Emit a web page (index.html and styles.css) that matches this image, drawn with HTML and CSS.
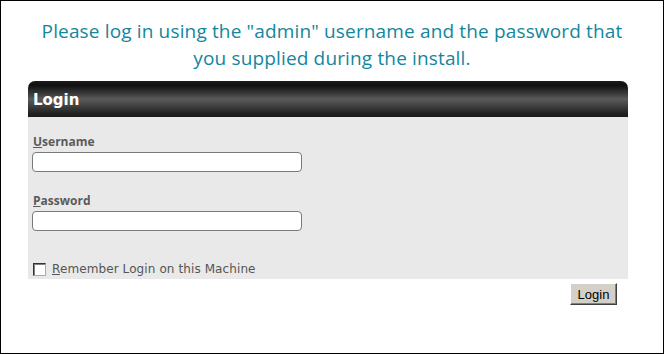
FILE: index.html
```html
<!DOCTYPE html>
<html>
<head>
<meta charset="utf-8">
<link rel="stylesheet" href="styles.css">
</head>
<body>
<div class="frame">
  <h1 class="intro">Please log in using the "admin" username and the password that you supplied during the install.</h1>
  <div class="panel">
    <div class="panel-head">Login</div>
    <div class="panel-body">
      <label class="field-label" for="user"><u>U</u>sername</label>
      <input class="text-input" id="user" type="text">
      <label class="field-label pw" for="pass"><u>P</u>assword</label>
      <input class="text-input" id="pass" type="password">
      <label class="remember"><span class="check"></span><span><u>R</u>emember Login on this Machine</span></label>
    </div>
    <div class="actions"><button class="btn" type="button">Login</button></div>
  </div>
</div>
</body>
</html>
```
FILE: styles.css
```css
html, body { margin: 0; padding: 0; background: #fff; }
.frame {
  width: 664px; height: 354px; box-sizing: border-box;
  border: 1px solid #000;
  font-family: "Open Sans", "DejaVu Sans", sans-serif;
}
.intro {
  margin: 17px 0 0 0;
  padding: 0 30px;
  text-align: center;
  font-weight: normal;
  font-size: 19px;
  line-height: 27px;
  letter-spacing: 0.15px;
  color: #13869d;
}
.panel { margin: 9px 0 0 27px; width: 600px; }
.panel-head {
  height: 36px; box-sizing: border-box;
  border-radius: 7px 7px 0 0;
  background: linear-gradient(#1c1c1c 0%, #101010 12%, #3a3a3a 35%, #5a5a5a 50%, #464646 65%, #222 90%, #1a1a1a 100%);
  color: #fff; font-weight: bold; font-size: 15px;
  padding: 10px 0 0 5px;
  font-family: "DejaVu Sans", sans-serif;
}
.panel-body {
  background: #e9e9e9;
  height: 162px; box-sizing: border-box;
  padding: 17px 0 0 4px;
  display: flex; flex-direction: column; align-items: flex-start;
}
.field-label {
  font-family: "Open Sans", sans-serif;
  font-weight: bold; font-size: 12px; color: #5b5b5b; line-height: 16px;
  margin-left: 1px;
}
.field-label.pw { margin-top: 21px; }
.text-input {
  margin-top: 2px;
  width: 270px; height: 20px; box-sizing: border-box;
  border: 1px solid #7a7a7a; border-radius: 4px; background: #fff;
  padding: 0; outline: none;
}
.remember {
  margin-top: 31px; margin-left: 1px;
  display: flex; align-items: center; gap: 6px;
  font-family: "DejaVu Sans", sans-serif;
  font-size: 12px; color: #555; letter-spacing: 0.1px;
}
.check {
  width: 13px; height: 13px; box-sizing: border-box;
  border: 1px solid #333; border-right-color: #aaa; border-bottom-color: #aaa;
  background: #fff;
  box-shadow: inset 1px 1px 0 #808080;
}
.actions { display: flex; justify-content: flex-end; padding: 4px 11px 0 0; }
.btn {
  width: 47px; height: 22px; box-sizing: border-box;
  background: #d4d0c8;
  border: 1px solid; border-color: #fff #404040 #404040 #fff;
  box-shadow: inset -1px -1px 0 #808080;
  font-family: "Liberation Sans", Arial, sans-serif; font-size: 13px; color: #000;
  padding: 0;
}
```
